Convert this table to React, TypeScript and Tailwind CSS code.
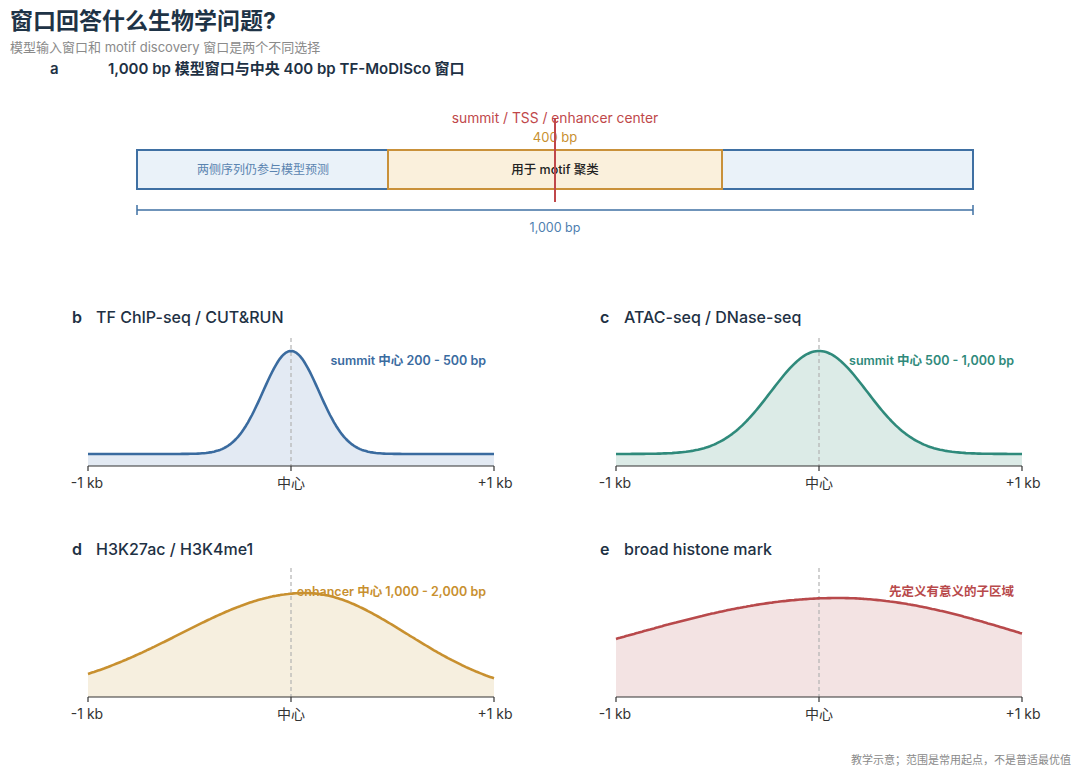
import React from 'react';

type Curve = {
  center: number;
  amp: number;
  sl: number;
  sr: number;
  base: number;
};

const X0 = 28;
const X1 = 434;
const CX = 231;

// asymmetric gaussian sampled into a polyline
function curvePoints(c: Curve, axisY: number) {
  const pts: [number, number][] = [];
  for (let x = X0; x <= X1; x += 2) {
    const s = x < c.center ? c.sl : c.sr;
    const h = c.amp * Math.exp(-((x - c.center) ** 2) / (2 * s * s));
    pts.push([x, axisY - c.base - h]);
  }
  return pts;
}

function Chart({
  curve,
  axisY,
  dashTop,
  stroke,
  fill,
  label,
  labelY,
}: {
  curve: Curve;
  axisY: number;
  dashTop: number;
  stroke: string;
  fill: string;
  label: string;
  labelY: number;
}) {
  const pts = curvePoints(curve, axisY);
  const line = pts.map(([x, y], i) => `${i ? 'L' : 'M'}${x.toFixed(1)} ${y.toFixed(1)}`).join(' ');
  const area = `${line} L${X1} ${axisY} L${X0} ${axisY} Z`;
  const tickY = axisY + 22;

  return (
    <svg width={528} height={166} viewBox="0 0 528 166" className="block">
      <path d={area} fill={fill} />
      <line x1={CX} y1={dashTop} x2={CX} y2={axisY} stroke="#b3b3b3" strokeWidth={1.2} strokeDasharray="4 3" />
      <path d={line} fill="none" stroke={stroke} strokeWidth={2.6} strokeLinejoin="round" />
      <line x1={X0} y1={axisY} x2={X1} y2={axisY} stroke="#333" strokeWidth={1.2} />
      {[X0, CX, X1].map((x) => (
        <line key={x} x1={x} y1={axisY} x2={x} y2={axisY + 5} stroke="#333" strokeWidth={1.2} />
      ))}
      <text x={426} y={labelY} textAnchor="end" fontSize={12.5} fontWeight={600} fill={stroke}>
        {label}
      </text>
      <text x={X0 - 1} y={tickY} textAnchor="middle" fontSize={14} fill="#333">
        -1 kb
      </text>
      <text x={CX} y={tickY} textAnchor="middle" fontSize={14} fill="#333">
        中心
      </text>
      <text x={X1 + 1} y={tickY} textAnchor="middle" fontSize={14} fill="#333">
        +1 kb
      </text>
    </svg>
  );
}

function PanelHeader({ letter, title }: { letter: string; title: string }) {
  return (
    <div className="flex h-[34px] items-center pl-[12px] text-[16px] font-medium text-[#1e3144]">
      <span className="w-[24px] font-semibold">{letter}</span>
      <span>{title}</span>
    </div>
  );
}

function WindowDiagram() {
  return (
    <svg width={1080} height={150} viewBox="0 0 1080 150" className="block">
      <text x={555} y={23} textAnchor="middle" fontSize={13.8} fill="#c0474a">
        summit / TSS / enhancer center
      </text>
      <text x={555} y={42} textAnchor="middle" fontSize={13} fill="#c8902f">
        400 bp
      </text>
      <rect x={137} y={50} width={836} height={39} fill="#eaf2f9" stroke="#3f70a3" strokeWidth={2} />
      <rect x={388} y={50} width={334} height={39} fill="#faf0dc" stroke="#c9913a" strokeWidth={2} />
      <text x={263} y={74} textAnchor="middle" fontSize={12} fill="#5a84b0">
        两侧序列仍参与模型预测
      </text>
      <text x={555} y={74} textAnchor="middle" fontSize={12.5} fontWeight={500} fill="#222">
        用于 motif 聚类
      </text>
      <line x1={555} y1={18} x2={555} y2={102} stroke="#c0474a" strokeWidth={2} />
      <line x1={137} y1={110} x2={973} y2={110} stroke="#3f70a3" strokeWidth={1.5} />
      <line x1={137} y1={105} x2={137} y2={115} stroke="#3f70a3" strokeWidth={1.5} />
      <line x1={973} y1={105} x2={973} y2={115} stroke="#3f70a3" strokeWidth={1.5} />
      <text x={555} y={132} textAnchor="middle" fontSize={12.5} fill="#4f7fb0">
        1,000 bp
      </text>
    </svg>
  );
}

const panels = [
  {
    letter: 'b',
    title: 'TF ChIP-seq / CUT&RUN',
    curve: { center: CX, amp: 103, sl: 28, sr: 28, base: 12 },
    stroke: '#3a6b9f',
    fill: '#e3eaf3',
    label: 'summit 中心 200 - 500 bp',
  },
  {
    letter: 'c',
    title: 'ATAC-seq / DNase-seq',
    curve: { center: CX, amp: 103, sl: 48, sr: 48, base: 12 },
    stroke: '#2f8a7b',
    fill: '#dcebe7',
    label: 'summit 中心 500 - 1,000 bp',
  },
  {
    letter: 'd',
    title: 'H3K27ac / H3K4me1',
    curve: { center: 245, amp: 104, sl: 125, sr: 102, base: 0 },
    stroke: '#c8902f',
    fill: '#f6efdf',
    label: 'enhancer 中心 1,000 - 2,000 bp',
  },
  {
    letter: 'e',
    title: 'broad histone mark',
    curve: { center: 250, amp: 99, sl: 215, sr: 195, base: 0 },
    stroke: '#b8494b',
    fill: '#f3e3e3',
    label: '先定义有意义的子区域',
  },
];

export default function App() {
  return (
    <div className="h-[776px] w-[1080px] overflow-hidden bg-white font-['Inter','Noto_Sans_CJK_SC',sans-serif]">
      {/* Header */}
      <div className="px-[10px] pt-[7px]">
        <h1 className="text-[23px] font-bold leading-[28px] text-[#1e3346]">窗口回答什么生物学问题?</h1>
        <p className="mt-[4px] text-[13px] leading-[16px] text-[#8a8a8a]">
          模型输入窗口和 motif discovery 窗口是两个不同选择
        </p>
      </div>

      {/* Panel a */}
      <div className="mt-[3px] flex h-[22px] items-center pl-[50px] text-[15px] font-semibold text-[#1e3144]">
        <span className="w-[58px]">a</span>
        <span>1,000 bp 模型窗口与中央 400 bp TF-MoDISco 窗口</span>
      </div>
      <div className="mt-[20px]">
        <WindowDiagram />
      </div>

      {/* Panels b-e */}
      <div className="mt-[50px] grid grid-cols-[528px_528px] gap-y-[32px] pl-[60px]">
        {panels.map((p, i) => {
          const row2 = i >= 2;
          return (
            <div key={p.letter}>
              <PanelHeader letter={p.letter} title={p.title} />
              <Chart
                curve={p.curve}
                axisY={row2 ? 131 : 132}
                dashTop={row2 ? 2 : 4}
                stroke={p.stroke}
                fill={p.fill}
                label={p.label}
                labelY={row2 ? 30 : 31}
              />
            </div>
          );
        })}
      </div>

      {/* Footer */}
      <div className="mt-[21px] pr-[9px] text-right text-[11px] leading-[14px] text-[#8a8a8a]">
        教学示意；范围是常用起点，不是普适最优值
      </div>
    </div>
  );
}
